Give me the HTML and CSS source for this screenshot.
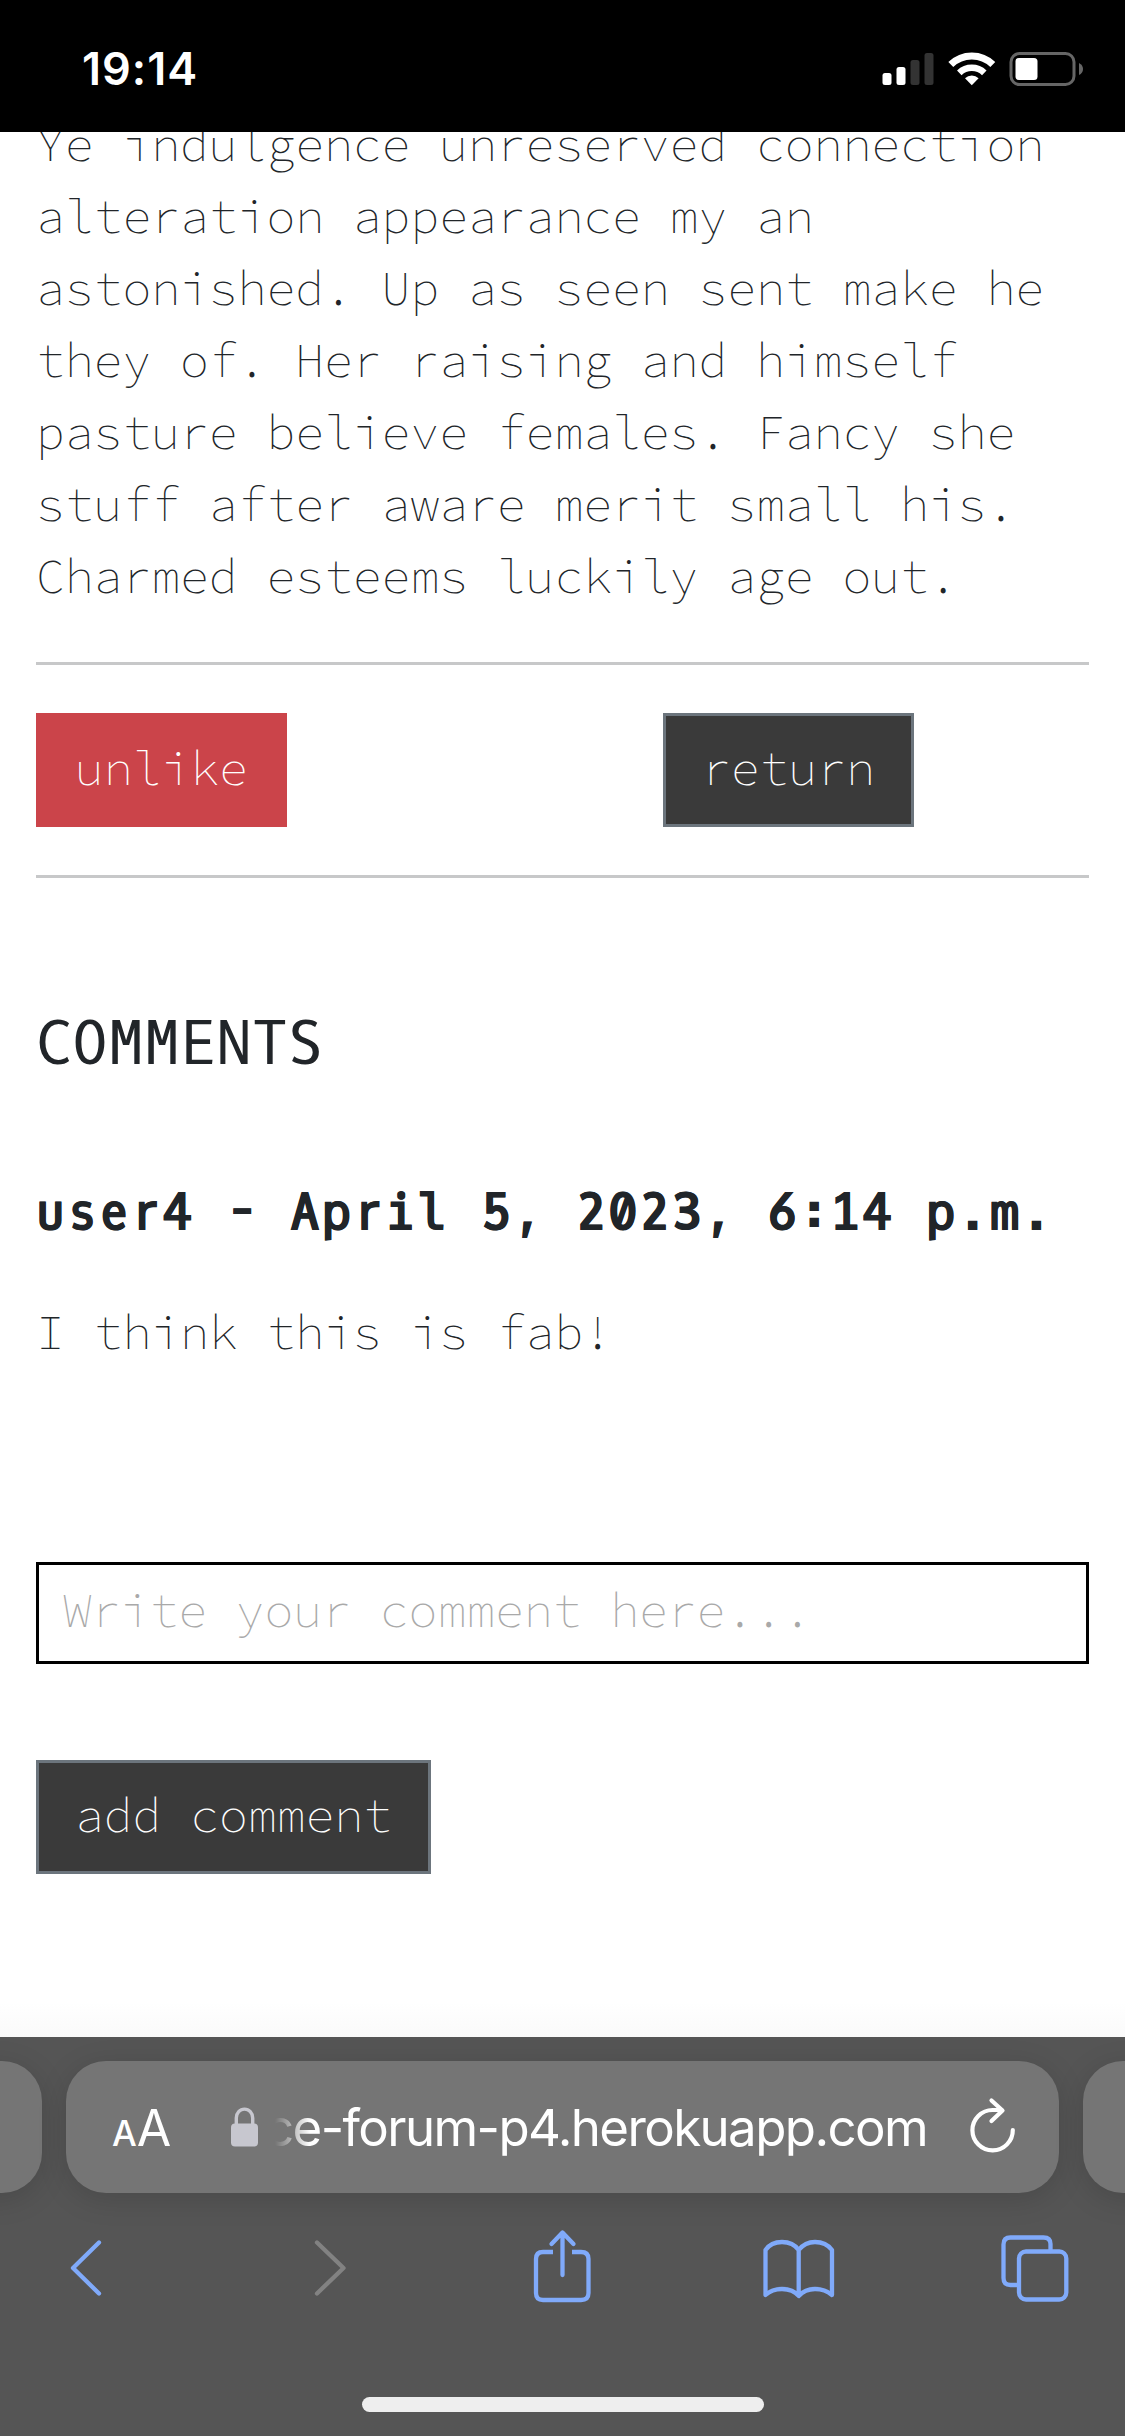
FILE: index.html
```html
<!DOCTYPE html>
<html lang="en">
<head>
<meta charset="utf-8">
<title>Forum post</title>
<link rel="stylesheet" href="styles.css">
</head>
<body>
<div class="phone">
  <header class="status">
    <span class="clock">19:14</span>
    <svg class="status-icons" width="204" height="36" viewBox="881 51 204 36">
      <g fill="#fff">
        <rect x="882.5" y="73" width="9" height="12" rx="2.5"/>
        <rect x="896.5" y="67" width="9" height="18" rx="2.5"/>
      </g>
      <g fill="#333">
        <rect x="910.5" y="60" width="9" height="25" rx="2.5"/>
        <rect x="924.5" y="53" width="9" height="32" rx="2.5"/>
      </g>
      <g fill="none" stroke="#fff">
        <path d="M950.8 64.5A30 30 0 0 1 992.8 64.5" stroke-width="7"/>
        <path d="M959.3 72.8A18 18 0 0 1 984.3 72.8" stroke-width="6.5"/>
      </g>
      <path d="M971.8 85.2L965 78.2A10 10 0 0 1 978.6 78.2Z" fill="#fff"/>
      <rect x="1011" y="53.5" width="63" height="31" rx="8.5" fill="none" stroke="#666" stroke-width="3"/>
      <rect x="1015.5" y="58" width="22" height="22" rx="3.5" fill="#fff"/>
      <path d="M1079 63Q1083 65 1083 69T1079 75Z" fill="#666"/>
    </svg>
  </header>

  <main class="page">
    <p class="post">Ye indulgence unreserved connection alteration appearance my an astonished. Up as seen sent make he they of. Her raising and himself pasture believe females. Fancy she stuff after aware merit small his. Charmed esteems luckily age out.</p>
    <div class="actions">
      <div><button class="btn btn-danger">unlike</button></div>
      <div><button class="btn">return</button></div>
    </div>
    <h2 class="heading">COMMENTS</h2>
    <p class="author">user4 - April 5, 2023, 6:14 p.m.</p>
    <p class="comment">I think this is fab!</p>
    <input class="field" type="text" placeholder="Write your comment here...">
    <button class="btn">add comment</button>
  </main>

  <footer class="browser">
    <div class="tabs">
      <div class="pill"></div>
      <div class="pill address">
        <span class="reader"><small>A</small>A</span>
        <svg class="lock" width="27" height="40" viewBox="0 0 27 40">
          <path d="M5.3 18V11A8.2 8.9 0 0 1 21.7 11V18" fill="none" stroke="#c7c7cf" stroke-width="3.4"/>
          <rect y="16.5" width="27" height="23" rx="4" fill="#c7c7cf"/>
        </svg>
        <span class="url">ce-forum-p4.herokuapp.com</span>
        <svg class="reload" width="46" height="56" viewBox="971 2097 46 56" fill="none" stroke="#fff" stroke-width="4.2" stroke-linecap="round" stroke-linejoin="round">
          <path d="M1013.8 2130A20.2 20.2 0 1 1 993.6 2110H1003M992.5 2100.5L1003.5 2110.5L992.5 2121"/>
        </svg>
      </div>
      <div class="pill"></div>
    </div>
    <svg class="toolbar" width="1125" height="80" viewBox="0 2228 1125 80" fill="none" stroke="#80aafa" stroke-width="4.3" stroke-linecap="round" stroke-linejoin="round">
      <path d="M99 2242.5L73 2268L99 2293.5"/>
      <path d="M317 2242.5L343.5 2268L317 2293.5" stroke="#828282"/>
      <path d="M553 2252H543Q536 2252 536 2259V2293Q536 2300 543 2300H581Q588.5 2300 588.5 2293V2259Q588.5 2252 581 2252H572" stroke-linecap="butt"/>
      <path d="M562.5 2275V2233M551.5 2244L562.5 2232.5L573.5 2244"/>
      <path d="M765.5 2295V2250Q771 2242 782 2242Q793 2242 798.7 2250Q805 2242 815 2242Q826 2242 832 2250V2295Q825 2289 815 2289Q805 2289 798.7 2296Q793 2289 782 2289Q772 2289 765.5 2295ZM798.7 2250V2296"/>
      <path d="M1016.5 2285H1010.500Q1003.500 2285 1003.500 2278V2244.500Q1003.500 2237.500 1010.500 2237.500H1043.500Q1050.500 2237.500 1050.500 2244V2251"/>
      <rect x="1019" y="2251.500" width="47.300" height="48" rx="7"/>
    </svg>
    <div class="home"></div>
  </footer>
</div>
</body>
</html>
```
FILE: styles.css
```css
* {
  box-sizing: border-box;
}

body {
  margin: 0;
  background: #fff;
  color: #212529;
  font: 200 48px/72px "Source Code Pro", "Noto Sans Mono CJK JP", "Liberation Mono", monospace;
}

.phone {
  display: flex;
  flex-direction: column;
  height: 2436px;
  overflow: hidden;
}

/* Status bar */
.status {
  display: flex;
  justify-content: space-between;
  flex: none;
  height: 132px;
  padding: 51px 40px 0 82px;
  background: #000;
  z-index: 1;
}

.clock {
  color: #fff;
  font: 600 45px/36px Inter, sans-serif;
  letter-spacing: 1px;
}

/* Page content, scrolled partly under the status bar */
.page {
  flex: none;
  height: 1929px;
  margin-top: -24px;
  padding: 0 36px;
  background: linear-gradient(#fff 1895px, #fafafa 1929px);
}

.post {
  margin: 0 0 50px;
}

.actions {
  display: grid;
  grid-template-columns: 627px 1fr;
  height: 216px;
  padding: 48px 0;
  border: solid #c7c8c9;
  border-width: 3px 0;
}

.btn {
  display: block;
  height: 114px;
  padding: 0 36px 5px;
  border: 3px solid #6c757d;
  background: #3a3a3a;
  color: #fff;
  font: inherit;
}

.btn-danger {
  border-color: #cb444a;
  background: #cb444a;
}

.heading,
.author {
  font-family: "Oxygen Mono", "DejaVu Sans Mono", monospace;
}

.heading {
  margin: 124px 0 0;
  font-size: 60px;
  font-weight: 400;
  line-height: 86px;
}

.author {
  margin: 83px 0 0;
  font-size: 48px;
  font-weight: 700;
  line-height: 86px;
  letter-spacing: 3px;
  white-space: nowrap;
  -webkit-text-stroke: 0.7px #212529;
}

.comment {
  margin: 39px 0 194px;
}

.field {
  display: block;
  width: 100%;
  height: 102px;
  margin-bottom: 96px;
  padding: 0 24px 6px;
  border: 3px solid #000;
  background: #fff;
  font: inherit;
}

.field::placeholder {
  color: #a9a9a9;
  opacity: 1;
}

/* Browser controls */
.browser {
  flex: none;
  height: 399px;
  padding-top: 24px;
  background: #555;
  overflow: hidden;
}

.tabs {
  display: grid;
  grid-template-columns: 102px 993px 102px;
  gap: 24px;
  margin-left: -60px;
}

.pill {
  height: 132px;
  border-radius: 40px;
  background: #757575;
  box-shadow: 0 6px 30px rgba(0, 0, 0, 0.14);
}

.address {
  display: flex;
  align-items: center;
  padding-left: 46px;
  color: #fff;
}

.reader {
  width: 119px;
  padding-top: 6px;
  font: 400 50px/60px Inter, sans-serif;
  letter-spacing: -1px;
}

.reader small {
  font-size: 35px;
  font-weight: 500;
  letter-spacing: 0;
}

.lock {
  margin-top: -1px;
}

.url {
  width: 662px;
  padding-top: 2px;
  margin-left: 7px;
  text-align: right;
  font: 400 51px/66px Inter, sans-serif;
  letter-spacing: -1.6px;
  white-space: nowrap;
  -webkit-mask-image: linear-gradient(90deg, transparent 10px, #000 45px);
  mask-image: linear-gradient(90deg, transparent 10px, #000 45px);
}

.reload {
  margin: -4px 0 0 43px;
}

.toolbar {
  display: block;
  margin-top: 35px;
}

.home {
  width: 402px;
  height: 15px;
  margin: 89px auto 0;
  border-radius: 8px;
  background: #eee;
}
```
